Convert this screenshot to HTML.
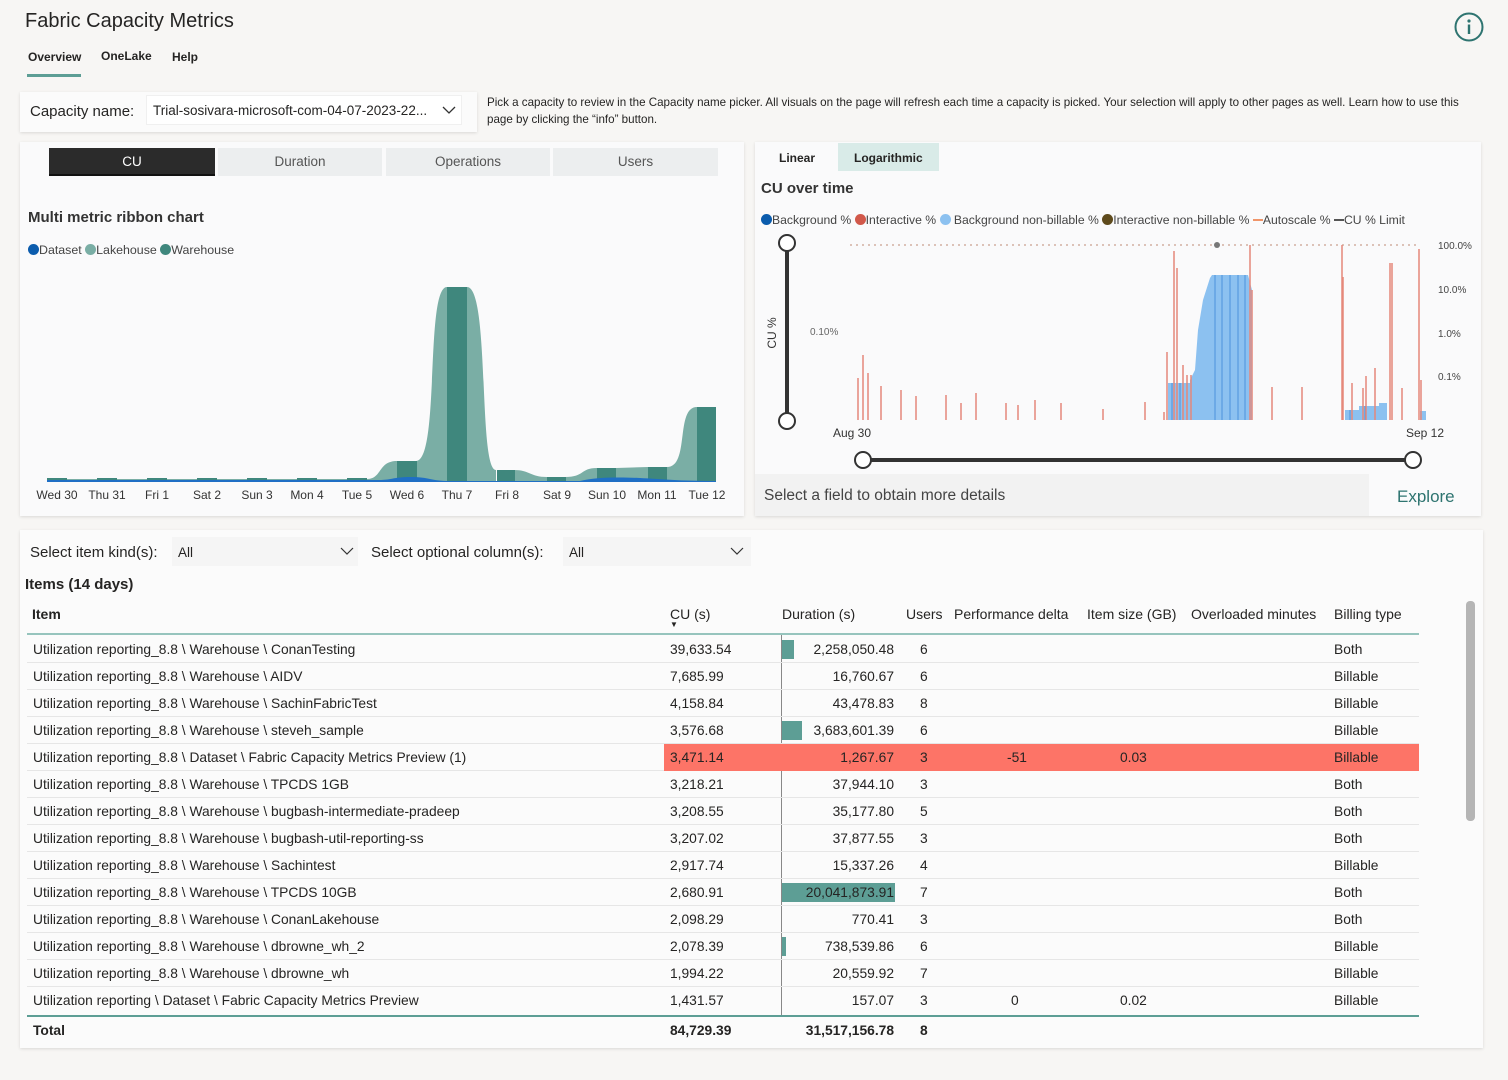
<!DOCTYPE html>
<html><head><meta charset="utf-8"><style>
*{margin:0;padding:0;box-sizing:border-box}
body{width:1508px;height:1080px;background:#f7f6f4;font-family:"Liberation Sans",sans-serif;color:#252423;position:relative;overflow:hidden;font-size:13px}
.a{position:absolute;white-space:nowrap}
.panel{position:absolute;background:#fafafb;box-shadow:0 1px 3px rgba(0,0,0,.12)}
.tab{position:absolute;top:148px;height:28px;background:#eceeef;color:#555;font-size:13.5px;text-align:center;line-height:28px}
.row{position:absolute;left:27px;width:1392px;height:27px;border-bottom:1px solid #e6e6e6;font-size:13.8px}
.row span{position:absolute;top:6px}
.h{position:absolute;top:606px;font-size:14px}
</style></head><body>
<div class="a" style="left:25px;top:10px;font-size:20px;color:#252423">Fabric Capacity Metrics</div>
<div class="a" style="left:28px;top:50px;font-size:12px;font-weight:bold">Overview</div>
<div class="a" style="left:27px;top:74px;width:54px;height:3px;background:#5d9e95"></div>
<div class="a" style="left:101px;top:49px;font-size:12px;font-weight:bold">OneLake</div>
<div class="a" style="left:172px;top:50px;font-size:12px;font-weight:bold">Help</div>
<svg class="a" style="left:1453px;top:12px" width="32" height="32"><circle cx="16" cy="15" r="13.5" fill="none" stroke="#2e7470" stroke-width="2"/><circle cx="16" cy="9" r="1.6" fill="#2e7470"/><rect x="14.8" y="12.5" width="2.4" height="9.5" fill="#2e7470"/></svg>

<div class="panel" style="left:20px;top:92px;width:457px;height:40px;background:#fbfbfb"></div>
<div class="a" style="left:30px;top:103px;font-size:15px">Capacity name:</div>
<div class="a" style="left:146px;top:95px;width:316px;height:30px;background:#fff;border:1px solid #f0f0f0"></div>
<div class="a" style="left:153px;top:103px;font-size:13.5px">Trial-sosivara-microsoft-com-04-07-2023-22...</div>
<svg class="a" style="left:441px;top:104px" width="16" height="12"><path d="M2 3l6 6 6-6" fill="none" stroke="#333" stroke-width="1.3"/></svg>
<div class="a" style="left:487px;top:94px;font-size:11.6px;line-height:17px;white-space:normal;width:985px">Pick a capacity to review in the Capacity name picker. All visuals on the page will refresh each time a capacity is picked. Your selection will apply to other pages as well. Learn how to use this page by clicking the “info” button.</div>

<!-- left panel -->
<div class="panel" style="left:20px;top:142px;width:724px;height:374px"></div>
<div class="tab" style="left:49px;width:166px;background:#2b2b2b;color:#fff;border-bottom:2px solid #111">CU</div>
<div class="tab" style="left:218px;width:164px">Duration</div>
<div class="tab" style="left:386px;width:164px">Operations</div>
<div class="tab" style="left:553px;width:165px">Users</div>
<div class="a" style="left:28px;top:209px;font-size:15px;font-weight:bold;color:#333">Multi metric ribbon chart</div>
<div class="a" style="left:28px;top:243px;font-size:12.4px;color:#444"><span style="display:inline-block;width:11px;height:11px;border-radius:50%;background:#0b5cad;vertical-align:-1px"></span>Dataset <span style="display:inline-block;width:11px;height:11px;border-radius:50%;background:#7aaea5;vertical-align:-1px"></span>Lakehouse <span style="display:inline-block;width:11px;height:11px;border-radius:50%;background:#3f877d;vertical-align:-1px"></span>Warehouse</div>
<svg class="a" style="left:0;top:0" width="750" height="520">
<g fill="#7aaea5">
<rect x="47" y="479" width="350" height="2"/>
<path d="M367 481 L367 479 C382 479 378 461 397 461 L397 481Z"/>
<path d="M416 481 L416 461 C440 461 425 287 447 287 L447 481Z"/>
<path d="M467 481 L467 287 C490 287 478 470 496 470 L496 481Z"/>
<path d="M514 481 L514 470 C530 470 530 477 547 477 L547 481Z"/>
<path d="M565 481 L565 477 C585 477 580 468 597 468 L597 481Z"/>
<path d="M616 481 L616 468 L648 467 L648 481Z"/>
<path d="M667 481 L667 467 C690 467 675 407 697 407 L697 481Z"/>
</g>
<g fill="#3f877d">
<rect x="47" y="478" width="20" height="3"/><rect x="97" y="478" width="20" height="3"/><rect x="147" y="478" width="20" height="3"/><rect x="197" y="478" width="20" height="3"/><rect x="247" y="478" width="20" height="3"/><rect x="297" y="478" width="20" height="3"/><rect x="347" y="478" width="20" height="3"/>
<rect x="397" y="461" width="20" height="20"/><rect x="447" y="287" width="20" height="194"/><rect x="497" y="470" width="18" height="11"/><rect x="547" y="477" width="19" height="4"/><rect x="597" y="468" width="19" height="13"/><rect x="648" y="467" width="19" height="14"/><rect x="697" y="407" width="19" height="74"/>
</g>
<path d="M47 480 L380 480 C390 480 395 477 410 477 C430 477 430 481 450 481 L580 481 C595 477 620 477 640 478 C660 479 680 481 716 481 L716 482 L47 482Z" fill="#1f6fc5"/>
<g font-size="12" fill="#333" font-family="Liberation Sans" text-anchor="middle">
<text x="57" y="499">Wed 30</text><text x="107" y="499">Thu 31</text><text x="157" y="499">Fri 1</text><text x="207" y="499">Sat 2</text><text x="257" y="499">Sun 3</text><text x="307" y="499">Mon 4</text><text x="357" y="499">Tue 5</text><text x="407" y="499">Wed 6</text><text x="457" y="499">Thu 7</text><text x="507" y="499">Fri 8</text><text x="557" y="499">Sat 9</text><text x="607" y="499">Sun 10</text><text x="657" y="499">Mon 11</text><text x="707" y="499">Tue 12</text>
</g>
</svg>

<!-- right panel -->
<div class="panel" style="left:755px;top:142px;width:726px;height:374px"></div>
<div class="a" style="left:838px;top:143px;width:101px;height:28px;background:#d9ebe8"></div>
<div class="a" style="left:779px;top:151px;font-size:12px;font-weight:bold">Linear</div>
<div class="a" style="left:854px;top:151px;font-size:12px;font-weight:bold">Logarithmic</div>
<div class="a" style="left:761px;top:180px;font-size:15px;font-weight:bold;color:#333">CU over time</div>
<div class="a" style="left:761px;top:213px;font-size:12.2px;color:#444"><span style="display:inline-block;width:11px;height:11px;border-radius:50%;background:#0b5cad;vertical-align:-1px"></span>Background % <span style="display:inline-block;width:11px;height:11px;border-radius:50%;background:#d1584a;vertical-align:-1px"></span>Interactive % <span style="display:inline-block;width:11px;height:11px;border-radius:50%;background:#8cc1f0;vertical-align:-1px"></span> Background non-billable % <span style="display:inline-block;width:11px;height:11px;border-radius:50%;background:#5e4a1c;vertical-align:-1px"></span>Interactive non-billable % <span style="display:inline-block;width:10px;height:2px;background:#f0956a;vertical-align:3px"></span>Autoscale % <span style="display:inline-block;width:10px;height:2px;background:#555;vertical-align:3px"></span>CU % Limit</div>
<svg class="a" style="left:0;top:0" width="1508" height="520">
<line x1="787" y1="243" x2="787" y2="421" stroke="#333" stroke-width="4"/>
<circle cx="787" cy="243" r="8" fill="#fff" stroke="#333" stroke-width="2"/>
<circle cx="787" cy="421" r="8" fill="#fff" stroke="#333" stroke-width="2"/>
<text x="776" y="333" transform="rotate(-90 776 333)" font-size="12" fill="#333" text-anchor="middle">CU %</text>
<text x="810" y="335" font-size="10" fill="#666">0.10%</text>
<line x1="850" y1="245" x2="1420" y2="245" stroke="#c9a18f" stroke-dasharray="2 4" stroke-width="1.2"/>
<circle cx="1217" cy="245" r="3" fill="#777"/>
<g fill="#8cc1f0">
<rect x="1168" y="383" width="22" height="37"/>
<path d="M1190 420 L1190 380 L1195 370 L1198 330 L1203 300 L1210 278 L1212 275 L1248 275 L1252 290 L1252 420Z"/>
<rect x="1345" y="410" width="14" height="10"/><rect x="1359" y="406" width="20" height="14"/><rect x="1379" y="403" width="8" height="17"/><rect x="1420" y="411" width="6" height="9"/>
</g>
<g stroke="#3b86d6" stroke-width="0.8"><line x1="1172" y1="383" x2="1172" y2="420"/><line x1="1180" y1="383" x2="1180" y2="420"/><line x1="1215" y1="275" x2="1215" y2="420"/><line x1="1222" y1="275" x2="1222" y2="420"/><line x1="1230" y1="275" x2="1230" y2="420"/><line x1="1238" y1="275" x2="1238" y2="420"/><line x1="1245" y1="275" x2="1245" y2="420"/><line x1="1350" y1="410" x2="1350" y2="420"/><line x1="1365" y1="406" x2="1365" y2="420"/></g>
<g stroke="#e5887b" stroke-width="1.5">
<line x1="858" y1="378" x2="858" y2="420"/><line x1="863" y1="355" x2="863" y2="420"/><line x1="868" y1="373" x2="868" y2="420"/><line x1="881" y1="386" x2="881" y2="420"/><line x1="901" y1="390" x2="901" y2="420"/><line x1="916" y1="396" x2="916" y2="420"/><line x1="946" y1="395" x2="946" y2="420"/><line x1="961" y1="403" x2="961" y2="420"/><line x1="976" y1="393" x2="976" y2="420"/><line x1="1006" y1="403" x2="1006" y2="420"/><line x1="1018" y1="405" x2="1018" y2="420"/><line x1="1035" y1="400" x2="1035" y2="420"/><line x1="1061" y1="403" x2="1061" y2="420"/><line x1="1103" y1="409" x2="1103" y2="420"/><line x1="1145" y1="402" x2="1145" y2="420"/><line x1="1164" y1="412" x2="1164" y2="420"/><line x1="1167" y1="352" x2="1167" y2="420"/><line x1="1174" y1="251" x2="1174" y2="420"/><line x1="1177" y1="268" x2="1177" y2="420"/><line x1="1183" y1="365" x2="1183" y2="420"/><line x1="1187" y1="375" x2="1187" y2="420"/><line x1="1191" y1="375" x2="1191" y2="420"/><line x1="1250" y1="245" x2="1250" y2="420"/><line x1="1252" y1="290" x2="1252" y2="420"/><line x1="1272" y1="387" x2="1272" y2="420"/><line x1="1302" y1="387" x2="1302" y2="420"/><line x1="1342" y1="245" x2="1342" y2="420"/><line x1="1343" y1="277" x2="1343" y2="420"/><line x1="1352" y1="383" x2="1352" y2="420"/><line x1="1363" y1="388" x2="1363" y2="420"/><line x1="1366" y1="376" x2="1366" y2="420"/><line x1="1375" y1="368" x2="1375" y2="420"/><line x1="1390" y1="263" x2="1390" y2="420"/><line x1="1392" y1="263" x2="1392" y2="420"/><line x1="1402" y1="388" x2="1402" y2="420"/><line x1="1419" y1="249" x2="1419" y2="420"/><line x1="1421" y1="380" x2="1421" y2="420"/>
</g>
<g font-size="10" fill="#444"><text x="1438" y="249">100.0%</text><text x="1438" y="293">10.0%</text><text x="1438" y="337">1.0%</text><text x="1438" y="380">0.1%</text></g>
<g font-size="12" fill="#333"><text x="833" y="437">Aug 30</text><text x="1406" y="437">Sep 12</text></g>
<line x1="863" y1="460" x2="1413" y2="460" stroke="#333" stroke-width="4"/>
<circle cx="863" cy="460" r="8" fill="#fff" stroke="#333" stroke-width="2"/>
<circle cx="1413" cy="460" r="8" fill="#fff" stroke="#333" stroke-width="2"/>
</svg>
<div class="a" style="left:755px;top:474px;width:614px;height:42px;background:#f2f2f2"></div>
<div class="a" style="left:764px;top:487px;font-size:15.5px;color:#444">Select a field to obtain more details</div>
<div class="a" style="left:1397px;top:487px;font-size:17px;color:#2e7470">Explore</div>

<!-- bottom panel -->
<div class="panel" style="left:20px;top:530px;width:1463px;height:518px;background:#fbfbfb"></div>
<div class="a" style="left:30px;top:544px;font-size:15px">Select item kind(s):</div>
<div class="a" style="left:172px;top:537px;width:186px;height:29px;background:#f5f5f5"></div>
<div class="a" style="left:178px;top:545px;font-size:13.5px">All</div>
<svg class="a" style="left:339px;top:545px" width="16" height="12"><path d="M2 3l6 6 6-6" fill="none" stroke="#333" stroke-width="1.2"/></svg>
<div class="a" style="left:371px;top:544px;font-size:15px">Select optional column(s):</div>
<div class="a" style="left:563px;top:537px;width:188px;height:29px;background:#f5f5f5"></div>
<div class="a" style="left:569px;top:545px;font-size:13.5px">All</div>
<svg class="a" style="left:729px;top:545px" width="16" height="12"><path d="M2 3l6 6 6-6" fill="none" stroke="#333" stroke-width="1.2"/></svg>
<div class="a" style="left:25px;top:576px;font-size:15px;font-weight:bold">Items (14 days)</div>
<div class="a" style="left:1466px;top:601px;width:9px;height:220px;background:#b5b5b5;border-radius:4px"></div>

<div class="h" style="left:32px;font-weight:bold">Item</div>
<div class="h" style="left:670px">CU (s)</div>
<div class="a" style="top:620px;left:670px;font-size:8px">▼</div>
<div class="h" style="left:782px">Duration (s)</div>
<div class="h" style="left:906px">Users</div>
<div class="h" style="left:954px">Performance delta</div>
<div class="h" style="left:1087px">Item size (GB)</div>
<div class="h" style="left:1191px">Overloaded minutes</div>
<div class="h" style="left:1334px">Billing type</div>
<div class="a" style="top:633px;left:27px;width:1392px;height:2px;background:#96c4bd"></div>

<div class="a" style="left:781px;top:635px;width:1px;height:381px;background:#888"></div>

<div class="row" style="top:636px"><span style="left:6px">Utilization reporting_8.8 \ Warehouse \ ConanTesting</span><span style="left:643px">39,633.54</span><i class="a" style="left:755px;top:4px;width:12px;height:19px;background:#5d9e95"></i><span style="right:525px">2,258,050.48</span><span style="left:893px">6</span><span style="left:1307px">Both</span></div>
<div class="row" style="top:663px"><span style="left:6px">Utilization reporting_8.8 \ Warehouse \ AIDV</span><span style="left:643px">7,685.99</span><span style="right:525px">16,760.67</span><span style="left:893px">6</span><span style="left:1307px">Billable</span></div>
<div class="row" style="top:690px"><span style="left:6px">Utilization reporting_8.8 \ Warehouse \ SachinFabricTest</span><span style="left:643px">4,158.84</span><span style="right:525px">43,478.83</span><span style="left:893px">8</span><span style="left:1307px">Billable</span></div>
<div class="row" style="top:717px"><span style="left:6px">Utilization reporting_8.8 \ Warehouse \ steveh_sample</span><span style="left:643px">3,576.68</span><i class="a" style="left:755px;top:4px;width:20px;height:19px;background:#5d9e95"></i><span style="right:525px">3,683,601.39</span><span style="left:893px">6</span><span style="left:1307px">Billable</span></div>
<div class="row" style="top:744px"><i class="a" style="left:637px;top:0;width:755px;height:27px;background:#fd7467"></i><span style="left:6px">Utilization reporting_8.8 \ Dataset \ Fabric Capacity Metrics Preview (1)</span><span style="left:643px">3,471.14</span><span style="right:525px">1,267.67</span><span style="left:893px">3</span><span style="left:980px">-51</span><span style="left:1093px">0.03</span><span style="left:1307px">Billable</span></div>
<div class="row" style="top:771px"><span style="left:6px">Utilization reporting_8.8 \ Warehouse \ TPCDS 1GB</span><span style="left:643px">3,218.21</span><span style="right:525px">37,944.10</span><span style="left:893px">3</span><span style="left:1307px">Both</span></div>
<div class="row" style="top:798px"><span style="left:6px">Utilization reporting_8.8 \ Warehouse \ bugbash-intermediate-pradeep</span><span style="left:643px">3,208.55</span><span style="right:525px">35,177.80</span><span style="left:893px">5</span><span style="left:1307px">Both</span></div>
<div class="row" style="top:825px"><span style="left:6px">Utilization reporting_8.8 \ Warehouse \ bugbash-util-reporting-ss</span><span style="left:643px">3,207.02</span><span style="right:525px">37,877.55</span><span style="left:893px">3</span><span style="left:1307px">Both</span></div>
<div class="row" style="top:852px"><span style="left:6px">Utilization reporting_8.8 \ Warehouse \ Sachintest</span><span style="left:643px">2,917.74</span><span style="right:525px">15,337.26</span><span style="left:893px">4</span><span style="left:1307px">Billable</span></div>
<div class="row" style="top:879px"><span style="left:6px">Utilization reporting_8.8 \ Warehouse \ TPCDS 10GB</span><span style="left:643px">2,680.91</span><i class="a" style="left:755px;top:4px;width:113px;height:19px;background:#5d9e95"></i><span style="right:525px">20,041,873.91</span><span style="left:893px">7</span><span style="left:1307px">Both</span></div>
<div class="row" style="top:906px"><span style="left:6px">Utilization reporting_8.8 \ Warehouse \ ConanLakehouse</span><span style="left:643px">2,098.29</span><span style="right:525px">770.41</span><span style="left:893px">3</span><span style="left:1307px">Both</span></div>
<div class="row" style="top:933px"><span style="left:6px">Utilization reporting_8.8 \ Warehouse \ dbrowne_wh_2</span><span style="left:643px">2,078.39</span><i class="a" style="left:755px;top:4px;width:4px;height:19px;background:#5d9e95"></i><span style="right:525px">738,539.86</span><span style="left:893px">6</span><span style="left:1307px">Billable</span></div>
<div class="row" style="top:960px"><span style="left:6px">Utilization reporting_8.8 \ Warehouse \ dbrowne_wh</span><span style="left:643px">1,994.22</span><span style="right:525px">20,559.92</span><span style="left:893px">7</span><span style="left:1307px">Billable</span></div>
<div class="row" style="top:987px;border-bottom:none"><span style="left:6px">Utilization reporting \ Dataset \ Fabric Capacity Metrics Preview</span><span style="left:643px">1,431.57</span><span style="right:525px">157.07</span><span style="left:893px">3</span><span style="left:984px">0</span><span style="left:1093px">0.02</span><span style="left:1307px">Billable</span></div>
<div class="a" style="top:1015px;left:27px;width:1392px;height:2px;background:#5d9e95"></div>
<div class="row" style="top:1017px;border-bottom:none;font-weight:bold"><span style="left:6px">Total</span><span style="left:643px">84,729.39</span><span style="right:525px">31,517,156.78</span><span style="left:893px">8</span></div>
</body></html>
